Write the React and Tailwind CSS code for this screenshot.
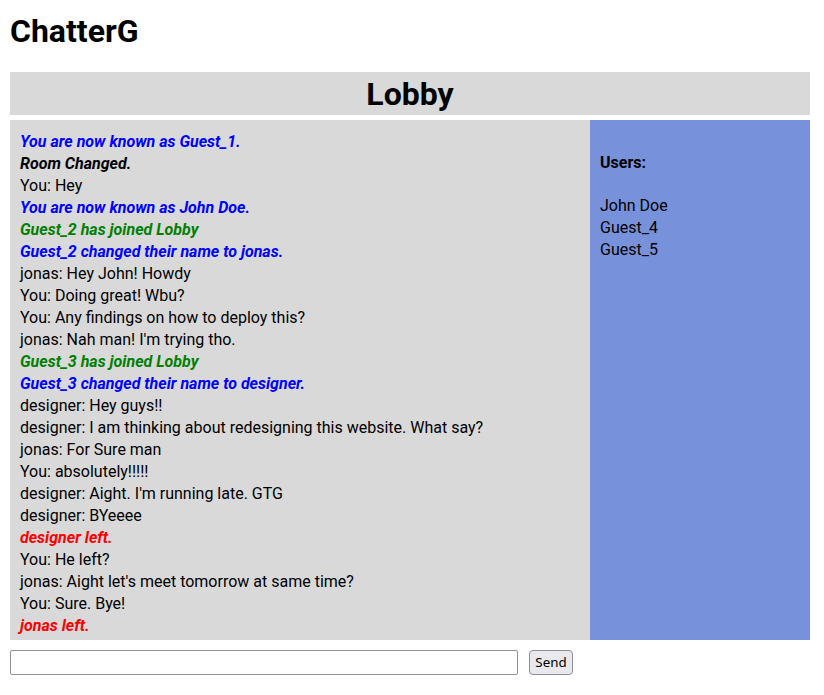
import { useState } from "react";

const messages = [
  { text: "You are now known as Guest_1.", type: "name" },
  { text: "Room Changed.", type: "room" },
  { text: "You: Hey" },
  { text: "You are now known as John Doe.", type: "name" },
  { text: "Guest_2 has joined Lobby", type: "join" },
  { text: "Guest_2 changed their name to jonas.", type: "name" },
  { text: "jonas: Hey John! Howdy" },
  { text: "You: Doing great! Wbu?" },
  { text: "You: Any findings on how to deploy this?" },
  { text: "jonas: Nah man! I'm trying tho." },
  { text: "Guest_3 has joined Lobby", type: "join" },
  { text: "Guest_3 changed their name to designer.", type: "name" },
  { text: "designer: Hey guys!!" },
  { text: "designer: I am thinking about redesigning this website. What say?" },
  { text: "jonas: For Sure man" },
  { text: "You: absolutely!!!!!" },
  { text: "designer: Aight. I'm running late. GTG" },
  { text: "designer: BYeeee" },
  { text: "designer left.", type: "left" },
  { text: "You: He left?" },
  { text: "jonas: Aight let's meet tomorrow at same time?" },
  { text: "You: Sure. Bye!" },
  { text: "jonas left.", type: "left" },
];

const users = ["John Doe", "Guest_4", "Guest_5"];

function msgClass(type) {
  // system messages are bold italic, coloured by kind
  if (type === "name") return "font-bold italic text-[#0000ff]";
  if (type === "join") return "font-bold italic text-[#008000]";
  if (type === "left") return "font-bold italic text-[#ff0000]";
  if (type === "room") return "font-bold italic text-black";
  return "text-black";
}

export default function App() {
  const [draft, setDraft] = useState("");

  return (
    <div className="min-h-screen bg-white px-[10px] text-black font-['Roboto','Liberation_Sans',sans-serif]">
      <div className="w-[800px]">
        <h1 className="pt-[12px] text-[32px] leading-[38px] font-bold">ChatterG</h1>

        {/* ROOM HEADER */}
        <div className="mt-[22px] h-[43px] bg-[#d9d9d9] flex items-center justify-center">
          <h2 className="text-[32px] leading-[38px] font-bold">Lobby</h2>
        </div>

        {/* BODY */}
        <div className="mt-[5px] flex h-[520px]">
          <div className="w-[580px] bg-[#d9d9d9] px-[10px] pt-[11px] overflow-hidden">
            {messages.map((m, i) => (
              <div key={i} className={`text-[16px] leading-[22px] ${msgClass(m.type)}`}>
                {m.text}
              </div>
            ))}
          </div>
          <div className="flex-1 bg-[#7792db] px-[10px] pt-[11px]">
            <h4 className="mt-[21px] mb-[21px] text-[16px] leading-[22px] font-bold">Users:</h4>
            {users.map((u) => (
              <div key={u} className="text-[16px] leading-[22px]">{u}</div>
            ))}
          </div>
        </div>

        {/* INPUT */}
        <form className="mt-[10px] flex items-center" onSubmit={(e) => e.preventDefault()}>
          <input
            value={draft}
            onChange={(e) => setDraft(e.target.value)}
            className="w-[508px] h-[25px] border border-[#8f8f9d] rounded-[2px] bg-white px-[2px] text-[13px] outline-none"
          />
          <button
            type="submit"
            className="ml-[11px] h-[25px] w-[44px] border border-[#8f8f9d] rounded-[4px] bg-[#e9e9ed] text-[13.33px] font-['Noto_Sans',sans-serif]"
          >
            Send
          </button>
        </form>
      </div>
    </div>
  );
}
